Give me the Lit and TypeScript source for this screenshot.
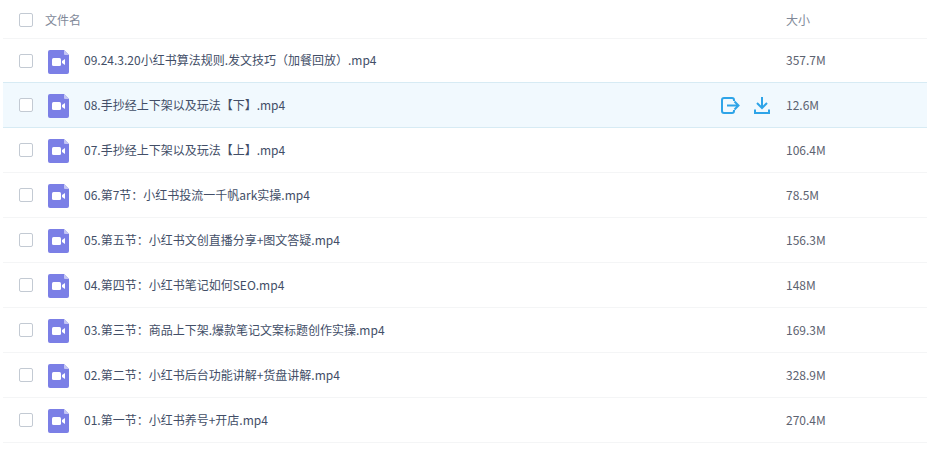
import { LitElement, html, css } from 'lit';
import { customElement } from 'lit/decorators.js';

const files = [
  { name: '09.24.3.20小红书算法规则.发文技巧（加餐回放）.mp4', size: '357.7M' },
  { name: '08.手抄经上下架以及玩法【下】.mp4', size: '12.6M', active: true },
  { name: '07.手抄经上下架以及玩法【上】.mp4', size: '106.4M' },
  { name: '06.第7节：小红书投流一千帆ark实操.mp4', size: '78.5M' },
  { name: '05.第五节：小红书文创直播分享+图文答疑.mp4', size: '156.3M' },
  { name: '04.第四节：小红书笔记如何SEO.mp4', size: '148M' },
  { name: '03.第三节：商品上下架.爆款笔记文案标题创作实操.mp4', size: '169.3M' },
  { name: '02.第二节：小红书后台功能讲解+货盘讲解.mp4', size: '328.9M' },
  { name: '01.第一节：小红书养号+开店.mp4', size: '270.4M' },
];

@customElement('app-root')
export class AppRoot extends LitElement {
  static styles = css`
    :host {
      display: block;
      width: 927px;
      height: 460px;
      background: #fff;
      font-family: "Noto Sans CJK SC", sans-serif;
      font-size: 12px;
      color: #424e67;
      overflow: hidden;
    }
    .list {
      margin-left: 3px;
    }
    .head, .row {
      display: flex;
      align-items: center;
      border-bottom: 1px solid #f4f5f6;
      box-sizing: border-box;
    }
    .head {
      height: 39px;
      padding-top: 2px;
      color: #818999;
    }
    .row {
      height: 45px;
    }
    .head + .row {
      height: 44px;
    }
    .row.active {
      background: #f1f9fe;
      border-top: 1px solid #d7ebf4;
      border-bottom: 1px solid #d7ebf4;
      height: 46px;
      margin-top: -1px;
    }
    .check {
      width: 14px;
      height: 14px;
      box-sizing: border-box;
      border: 1px solid #c3cad3;
      border-radius: 2px;
      background: #fff;
      margin-left: 16px;
      flex: none;
    }
    .head .title {
      margin-left: 12px;
      padding-bottom: 2px;
      flex: 1;
    }
    .file-icon {
      width: 22px;
      height: 24px;
      margin: 2px 0 0 15px;
      flex: none;
    }
    .name {
      margin-left: 14px;
      padding-bottom: 2px;
      flex: 1;
      white-space: nowrap;
    }
    .actions {
      display: flex;
      gap: 14px;
      margin-right: 16px;
      align-items: center;
    }
    .size {
      width: 141px;
      flex: none;
      padding-bottom: 2px;
      color: #5c6270;
    }
    .head .size {
      color: #818999;
    }
  `;

  fileIcon() {
    return html`<svg class="file-icon" viewBox="0 0 22 24">
      <path d="M2 0H16L21 5V22a2 2 0 0 1-2 2H2a2 2 0 0 1-2-2V2a2 2 0 0 1 2-2Z" fill="#7b7fe6"/>
      <path d="M16 0L21 5H17a1 1 0 0 1-1-1Z" fill="#c4c6f4"/>
      <rect x="4" y="8" width="9" height="8" rx="1.5" fill="#fff"/>
      <path d="M14 11L17 9V15L14 13Z" fill="#fff"/>
    </svg>`;
  }

  actions() {
    return html`<div class="actions">
      <svg width="19" height="17" viewBox="0 0 19 17" fill="none" stroke="#2ea4e8" stroke-width="2">
        <path d="M13 4V3a2 2 0 0 0-2-2H3a2 2 0 0 0-2 2V14a2 2 0 0 0 2 2H11a2 2 0 0 0 2-2V13"/>
        <path d="M6 8.5H17M13.5 4.5L17.5 8.5L13.5 12.5"/>
      </svg>
      <svg width="16" height="17" viewBox="0 0 16 17" fill="none" stroke="#2ea4e8" stroke-width="2">
        <path d="M8 0V10.5M3 6L8 11L13 6"/>
        <path d="M1 12.5V16H15V12.5"/>
      </svg>
    </div>`;
  }

  render() {
    return html`<div class="list">
      <div class="head">
        <span class="check"></span>
        <span class="title">文件名</span>
        <span class="size">大小</span>
      </div>
      ${files.map(
        (f) => html`<div class="row ${f.active ? 'active' : ''}">
          <span class="check"></span>
          ${this.fileIcon()}
          <span class="name">${f.name}</span>
          ${f.active ? this.actions() : ''}
          <span class="size">${f.size}</span>
        </div>`
      )}
    </div>`;
  }
}
